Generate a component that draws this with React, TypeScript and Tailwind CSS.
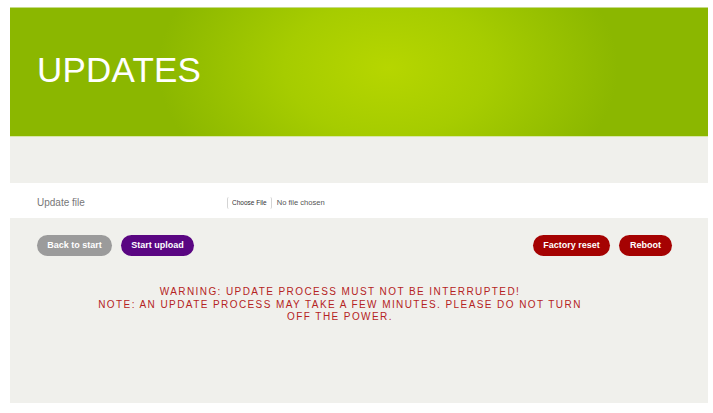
import React from "react";

export default function App() {
  const font = { fontFamily: '"Liberation Sans", Arial, sans-serif' };
  return (
    <div className="w-[713px] h-[413px] bg-white pt-[7px] pl-[10px]" style={font}>
      <div className="w-[698px] h-[396px] flex flex-col bg-[#f0f0ec]">
        <div className="h-[129px] bg-[radial-gradient(ellipse_230px_150px_at_378px_60px,#b6d600_0%,#a6cc00_45%,#8bb700_100%)] border-t border-[#c5da88] flex items-start pl-[27px] pt-[44px]">
          <h1 className="text-white text-[35px] leading-[35px] font-normal tracking-[0.2px]">UPDATES</h1>
        </div>
        <div className="h-[47px] border-t border-[#d7e6a8]" />
        <div className="h-[35px] bg-white flex items-center pl-[27px] pt-[4px]">
          <span className="w-[190px] text-[10px] text-[#777]">Update file</span>
          <div className="flex items-center">
            <span className="border-l border-r border-[#d4d4d4] rounded-[2px] px-[4px] h-[12px] flex items-center text-[6.5px] text-[#333] bg-white">Choose File</span>
            <span className="ml-[5px] text-[7.6px] text-[#555]">No file chosen</span>
          </div>
        </div>
        <div className="flex items-center justify-between pl-[27px] pr-[36px] pt-[17px]">
          <div className="flex gap-[9px]">
            <button className="h-[21px] w-[75px] rounded-full bg-[#9b9b9b] text-white text-[9px] font-bold">Back to start</button>
            <button className="h-[21px] w-[73px] rounded-full bg-[#5a0682] text-white text-[9px] font-bold">Start upload</button>
          </div>
          <div className="flex gap-[9px]">
            <button className="h-[21px] w-[77px] rounded-full bg-[#a50202] text-white text-[9px] font-bold">Factory reset</button>
            <button className="h-[21px] w-[53px] rounded-full bg-[#a50202] text-white text-[9px] font-bold">Reboot</button>
          </div>
        </div>
        <div className="ml-[80px] w-[500px] mt-[30px] text-center text-[10px] leading-[12.5px] tracking-[1.42px] text-[#b52323] uppercase">
          <div>Warning: Update process must not be interrupted!</div>
          <div>Note: An update process may take a few minutes. Please do not turn off the power.</div>
        </div>
      </div>
    </div>
  );
}
